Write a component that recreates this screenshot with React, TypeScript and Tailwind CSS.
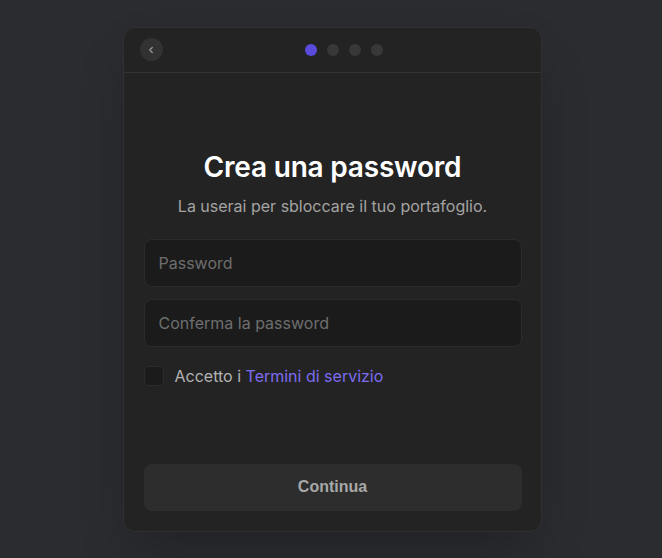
import React, { useState } from "react";

const App: React.FC = () => {
  const [accepted, setAccepted] = useState(false);
  const steps = [0, 1, 2, 3];
  const current = 0;

  return (
    <div
      className="min-h-[558px] w-full bg-[#2b2c30] flex items-center justify-center"
      style={{ fontFamily: "Inter, 'Noto Sans', sans-serif" }}
    >
      <div className="ml-[2px] w-[419px] h-[505px] bg-[#232323] border border-[#303030] rounded-xl shadow-2xl flex flex-col">
        <header className="h-[45px] border-b border-[#333333] flex items-center px-4">
          <button className="w-[23px] h-[23px] rounded-full bg-[#323232] flex items-center justify-center">
            <svg width="10" height="10" viewBox="0 0 24 24" fill="none" stroke="#9a9a9a" strokeWidth="3" strokeLinecap="round" strokeLinejoin="round">
              <path d="M15 18l-6-6 6-6" />
            </svg>
          </button>
          <div className="flex-1 flex items-center justify-center gap-[10px]">
            {steps.map((s) => (
              <span
                key={s}
                className={
                  s === current
                    ? "w-3 h-3 rounded-full bg-[#5a4bdc]"
                    : "w-3 h-3 rounded-full bg-[#383838]"
                }
              />
            ))}
          </div>
        </header>

        <div className="flex-1 flex flex-col pl-5 pr-[19px] pb-5 pt-[76px]">
          <h1 className="text-[28px] leading-9 font-semibold text-white text-center tracking-[-0.2px]">
            Crea una password
          </h1>
          <p className="mt-[9px] text-base leading-6 text-[#a3a3a3] text-center">
            La userai per sbloccare il tuo portafoglio.
          </p>

          <div className="mt-[21px] flex flex-col gap-3">
            <input
              type="password"
              placeholder="Password"
              className="h-[48px] w-full rounded-lg bg-[#1b1b1b] border border-[#2c2c2c] px-[14px] text-base text-white placeholder:text-[#6e6e6e] outline-none"
            />
            <input
              type="password"
              placeholder="Conferma la password"
              className="h-[48px] w-full rounded-lg bg-[#1b1b1b] border border-[#2c2c2c] px-[14px] text-base text-white placeholder:text-[#6e6e6e] outline-none"
            />
          </div>

          <label className="mt-[17px] flex items-center gap-[11px] cursor-pointer">
            <span
              onClick={() => setAccepted(!accepted)}
              className="w-5 h-5 rounded-[5px] bg-[#1b1b1b] border border-[#2c2c2c]"
            />
            <span className="text-base text-[#b3b3b3]">
              Accetto i <span className="text-[#7c6cf2]">Termini di servizio</span>
            </span>
          </label>

          <div className="flex-1" />

          <button
            className="h-[47px] w-full rounded-lg bg-[#2d2d2d] text-base font-bold text-[#a8a8a8]"
            style={{ fontFamily: "'Liberation Sans', Arial, sans-serif" }}
          >
            Continua
          </button>
        </div>
      </div>
    </div>
  );
};

export default App;
